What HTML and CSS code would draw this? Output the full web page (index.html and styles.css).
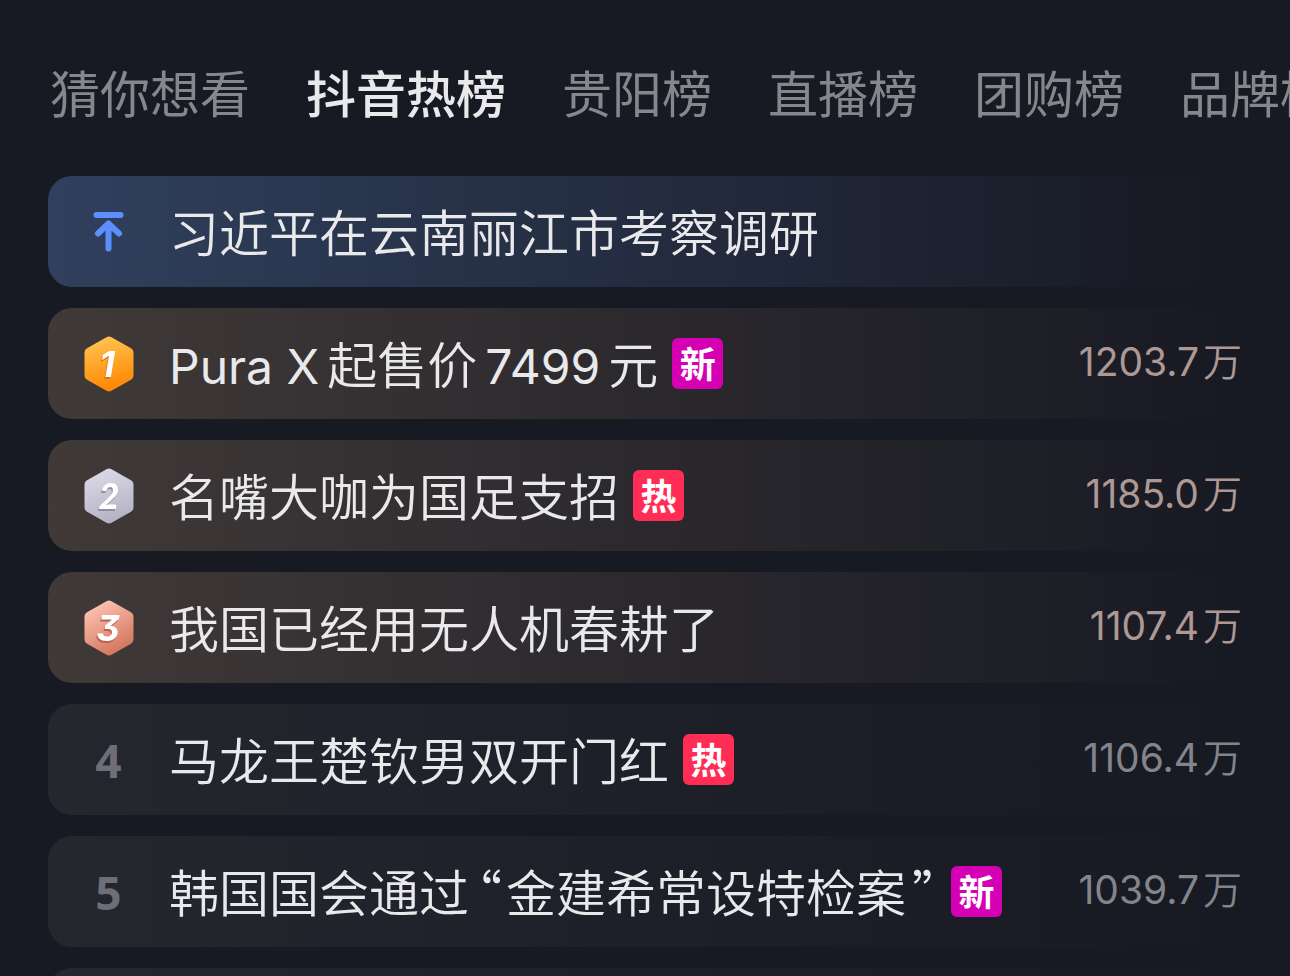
FILE: index.html
```html
<!DOCTYPE html>
<html lang="zh-CN">
<head>
<meta charset="utf-8">
<meta name="viewport" content="width=device-width, initial-scale=1">
<title>抖音热榜</title>
<link rel="stylesheet" href="styles.css">
</head>
<body>
<main class="page">
  <nav class="tabs" aria-label="榜单">
    <button class="tab" type="button">猜你想看</button>
    <button class="tab tab-active" type="button" aria-current="true">抖音热榜</button>
    <button class="tab" type="button">贵阳榜</button>
    <button class="tab" type="button">直播榜</button>
    <button class="tab" type="button">团购榜</button>
    <button class="tab" type="button">品牌榜</button>
  </nav>
  <ol class="list">
    <li class="row row-pinned">
      <span class="rank">
        <svg class="pin" viewBox="0 0 32 40" aria-hidden="true"><path d="M3.500 3H27.500M15.500 36.500V12.500M5 21.500L15.500 11.500L26 21.500" fill="none" stroke="#5b8fff" stroke-width="6" stroke-linecap="round" stroke-linejoin="round"/></svg>
      </span>
      <a class="title" href="#">习近平在云南丽江市考察调研</a>
    </li>
    <li class="row row-top">
      <span class="rank">
        <svg class="medal" viewBox="0 0 50 56" role="img" aria-label="1">
          <defs><linearGradient id="gold" x1="0.3" y1="0" x2="0.5" y2="1"><stop offset="0" stop-color="#ffc552"/><stop offset="1" stop-color="#ff8500"/></linearGradient></defs>
          <path d="M22.500 1.200Q25 -.3 27.500 1.200L47 12.200Q49.500 13.700 49.500 16.500V39.500Q49.500 42.300 47 43.800L27.500 54.800Q25 56.300 22.500 54.800L3 43.800Q.5 42.300 .5 39.500V16.500Q.5 13.700 3 12.200L22.500 1.200Z" fill="url(#gold)"/>
          <text class="digit digit-gold" x="23" y="41" text-anchor="middle">1</text>
        </svg>
      </span>
      <a class="title" href="#"><span class="latin">Pura X</span>起售价<span class="latin latin-mid">7499</span>元</a>
      <span class="badge badge-new">新</span>
      <span class="heat"><span class="num">1203.7</span>万</span>
    </li>
    <li class="row row-top">
      <span class="rank">
        <svg class="medal" viewBox="0 0 50 56" role="img" aria-label="2">
          <defs><linearGradient id="silver" x1="0.3" y1="0" x2="0.6" y2="1"><stop offset="0" stop-color="#dcdae7"/><stop offset="1" stop-color="#b3b0c3"/></linearGradient></defs>
          <path d="M22.500 1.200Q25 -.3 27.500 1.200L47 12.200Q49.500 13.700 49.500 16.500V39.500Q49.500 42.300 47 43.800L27.500 54.800Q25 56.300 22.500 54.800L3 43.800Q.5 42.300 .5 39.500V16.500Q.5 13.700 3 12.200L22.500 1.200Z" fill="url(#silver)"/>
          <text class="digit digit-silver" x="25" y="41" text-anchor="middle">2</text>
        </svg>
      </span>
      <a class="title" href="#">名嘴大咖为国足支招</a>
      <span class="badge badge-hot">热</span>
      <span class="heat"><span class="num">1185.0</span>万</span>
    </li>
    <li class="row row-top">
      <span class="rank">
        <svg class="medal" viewBox="0 0 50 56" role="img" aria-label="3">
          <defs><linearGradient id="bronze" x1="0.2" y1="0.1" x2="0.6" y2="0.9"><stop offset="0" stop-color="#fdc0af"/><stop offset="1" stop-color="#d67b62"/></linearGradient></defs>
          <path d="M22.500 1.200Q25 -.3 27.500 1.200L47 12.200Q49.500 13.700 49.500 16.500V39.500Q49.500 42.300 47 43.800L27.500 54.800Q25 56.300 22.500 54.800L3 43.800Q.5 42.300 .5 39.500V16.500Q.5 13.700 3 12.200L22.500 1.200Z" fill="url(#bronze)"/>
          <text class="digit digit-bronze" x="24" y="41" text-anchor="middle">3</text>
        </svg>
      </span>
      <a class="title" href="#">我国已经用无人机春耕了</a>
      <span class="heat"><span class="num">1107.4</span>万</span>
    </li>
    <li class="row">
      <span class="rank">4</span>
      <a class="title" href="#">马龙王楚钦男双开门红</a>
      <span class="badge badge-hot">热</span>
      <span class="heat"><span class="num">1106.4</span>万</span>
    </li>
    <li class="row">
      <span class="rank">5</span>
      <a class="title" href="#">韩国国会通过<span class="quote quote-open">“</span>金建希常设特检案<span class="quote quote-close">”</span></a>
      <span class="badge badge-new">新</span>
      <span class="heat"><span class="num">1039.7</span>万</span>
    </li>
    <li class="row"></li>
  </ol>
</main>
</body>
</html>
```
FILE: styles.css
```css
* {
  box-sizing: border-box;
}

body {
  margin: 0;
  background: #171923;
  color: #e9e9eb;
  font-family: "Noto Sans CJK SC", sans-serif;
}

.page {
  height: 100vh;
  overflow: hidden;
  padding: 53px 48px 0;
}

.tabs {
  display: flex;
  gap: 56px;
  margin-right: -48px;
  padding-left: 2px;
  overflow: hidden;
}

.tab {
  flex: none;
  padding: 0;
  border: 0;
  background: none;
  color: #86878c;
  font: inherit;
  font-size: 50px;
  line-height: 76px;
  white-space: nowrap;
}

.tab-active {
  color: #e9e9eb;
  font-weight: 500;
}

.list {
  display: flex;
  flex-direction: column;
  gap: 21px;
  margin: 47px 0 0;
  padding: 0;
  list-style: none;
}

.row {
  display: flex;
  align-items: center;
  height: 111px;
  flex: none;
  border-radius: 24px;
  background: linear-gradient(90deg, #25272f, #171923);
}

.row-pinned {
  background: linear-gradient(90deg, #30405d, #171923 98%);
}

.row-top {
  background: linear-gradient(90deg, #403938, #171923);
}

.rank {
  display: flex;
  flex: none;
  align-items: center;
  justify-content: center;
  width: 121px;
  color: #6d6e76;
  font-family: "Noto Sans", sans-serif;
  font-size: 46px;
  font-weight: 700;
  line-height: 56px;
}

.pin {
  width: 32px;
  height: 40px;
}

.medal {
  width: 50px;
  height: 56px;
}

.digit {
  fill: #fff;
  font-family: Inter, sans-serif;
  font-size: 36px;
  font-style: italic;
  font-weight: 700;
  font-feature-settings: "cv09";
}

.digit-gold {
  filter: drop-shadow(-1px 2px 0 #d07510);
}

.digit-silver {
  font-family: Lato, sans-serif;
  font-weight: 900;
  filter: drop-shadow(-1px 2px 0 #908da2);
}

.digit-bronze {
  filter: drop-shadow(-1px 2px 0 #b9634c);
}

.title {
  padding-bottom: 4px;
  color: inherit;
  font-size: 50px;
  font-weight: 350;
  line-height: 72px;
  text-decoration: none;
  white-space: nowrap;
}

.latin {
  margin-right: 8px;
  font-family: Inter, sans-serif;
  font-size: 48px;
  font-weight: 400;
  line-height: 1;
}

.latin-mid {
  margin-left: 8px;
}

.quote {
  font-feature-settings: "halt";
  line-height: 1;
}

.quote-open {
  margin: 0 4px 0 8px;
}

.quote-close {
  margin-left: 6px;
}

.badge {
  display: flex;
  flex: none;
  align-items: center;
  justify-content: center;
  width: 51px;
  height: 51px;
  margin-left: 14px;
  padding-bottom: 2px;
  border-radius: 6px;
  color: #fff;
  font-size: 36px;
  font-weight: 700;
  line-height: 49px;
}

.badge-new {
  background: #d500b3;
}

.badge-hot {
  background: #ff2c55;
}

.heat {
  margin-left: auto;
  padding-bottom: 10px;
  color: #84858b;
  font-size: 39px;
  font-weight: 350;
  line-height: 56px;
  white-space: nowrap;
}

.row-top .heat {
  color: #ad9893;
}

.num {
  margin-right: 4px;
  font-family: Inter, sans-serif;
  font-weight: 400;
  line-height: 1;
}
```
